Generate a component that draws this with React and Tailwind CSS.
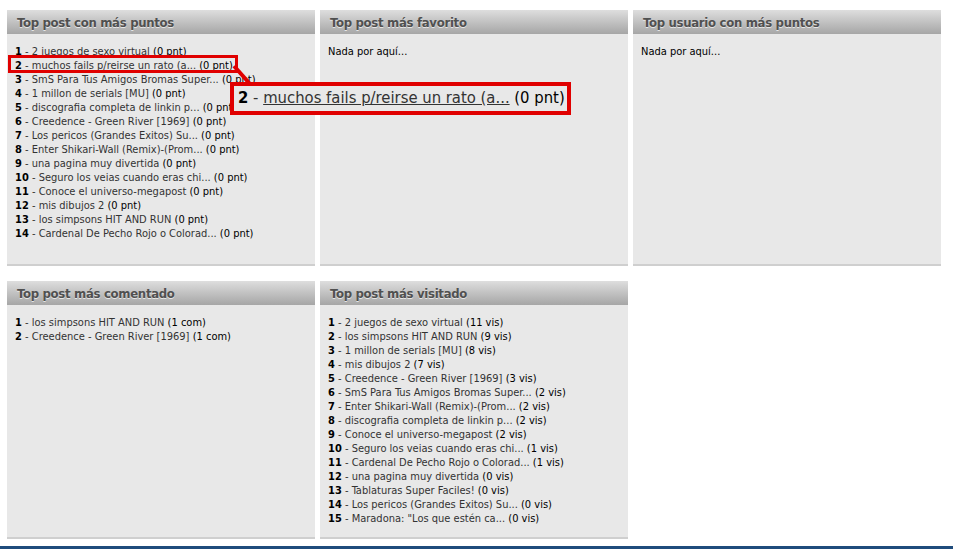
import React from "react";

const puntos = [
  "2 juegos de sexo virtual",
  "muchos fails p/reirse un rato (a...",
  "SmS Para Tus Amigos Bromas Super...",
  "1 millon de serials [MU]",
  "discografia completa de linkin p...",
  "Creedence - Green River [1969]",
  "Los pericos (Grandes Exitos) Su...",
  "Enter Shikari-Wall (Remix)-(Prom...",
  "una pagina muy divertida",
  "Seguro los veias cuando eras chi...",
  "Conoce el universo-megapost",
  "mis dibujos 2",
  "los simpsons HIT AND RUN",
  "Cardenal De Pecho Rojo o Colorad...",
].map((t) => [t, "0 pnt"]);

const comentados = [
  ["los simpsons HIT AND RUN", "1 com"],
  ["Creedence - Green River [1969]", "1 com"],
];

const visitados = [
  ["2 juegos de sexo virtual", "11 vis"],
  ["los simpsons HIT AND RUN", "9 vis"],
  ["1 millon de serials [MU]", "8 vis"],
  ["mis dibujos 2", "7 vis"],
  ["Creedence - Green River [1969]", "3 vis"],
  ["SmS Para Tus Amigos Bromas Super...", "2 vis"],
  ["Enter Shikari-Wall (Remix)-(Prom...", "2 vis"],
  ["discografia completa de linkin p...", "2 vis"],
  ["Conoce el universo-megapost", "2 vis"],
  ["Seguro los veias cuando eras chi...", "1 vis"],
  ["Cardenal De Pecho Rojo o Colorad...", "1 vis"],
  ["una pagina muy divertida", "0 vis"],
  ["Tablaturas Super Faciles!", "0 vis"],
  ["Los pericos (Grandes Exitos) Su...", "0 vis"],
  ["Maradona: \"Los que estén ca...", "0 vis"],
];

const Panel = ({ title, items, height, hover }) => (
  <div className="w-[308px] flex flex-col">
    <div className="h-[24px] bg-gradient-to-b from-[#dedede] to-[#a6a6a6] px-[10px] flex items-center">
      <span className="text-[13px] font-bold text-[#505050] tracking-[-0.3px] [text-shadow:0_1px_0_#e6e6e6] pt-[1px]">{title}</span>
    </div>
    <div className={`${height} bg-[#e8e8e8] border-b-2 border-[#cfcfcf] px-[8px] pt-[11px] text-[11px] leading-[14px]`}>
      {items ? (
        items.map(([t, c], i) => (
          <div key={i} className="whitespace-nowrap">
            <b className="text-black">{i + 1}</b>
            <span className="text-[#333]"> - </span>
            <span className={hover === i ? "text-[#333] underline" : "text-[#333]"}>{t}</span>
            <span className="text-black"> ({c})</span>
          </div>
        ))
      ) : (
        <div className="text-black">Nada por aquí...</div>
      )}
    </div>
  </div>
);

export default function App() {
  return (
    <div className="relative w-[953px] h-[549px] bg-white overflow-hidden font-['DejaVu_Sans_Condensed','Liberation_Sans',sans-serif]">
      <div className="pl-[7px] pt-[10px] flex flex-col gap-[15px]">
        <div className="flex gap-[5px]">
          <Panel title="Top post con más puntos" items={puntos} height="h-[232px]" hover={1} />
          <Panel title="Top post más favorito" height="h-[232px]" />
          <Panel title="Top usuario con más puntos" height="h-[232px]" />
        </div>
        <div className="flex gap-[5px]">
          <Panel title="Top post más comentado" items={comentados} height="h-[234px]" />
          <Panel title="Top post más visitado" items={visitados} height="h-[234px]" />
        </div>
      </div>
      <div className="absolute left-0 right-0 top-[546px] h-[3px] bg-[#1f4c7c]" />

      {/* zoom annotation */}
      <div className="absolute left-[8px] top-[55px] w-[230px] h-[18px] border-[3px] border-[#e00000]" />
      <svg className="absolute left-0 top-0" width="953" height="549">
        <line x1="234" y1="66" x2="250" y2="84" stroke="#e00000" strokeWidth="4" />
      </svg>
      <div className="absolute left-[230px] top-[82px] w-[341px] h-[33px] border-4 border-[#e00000] bg-[#e8e8e8] flex items-center pl-[4px] text-[16.5px] whitespace-nowrap">
        <b className="text-black">2</b>
        <span className="text-[#333]">&nbsp;-&nbsp;</span>
        <span className="text-[#333] underline">muchos fails p/reirse un rato (a...</span>
        <span className="text-black">&nbsp;(0 pnt)</span>
      </div>
    </div>
  );
}
